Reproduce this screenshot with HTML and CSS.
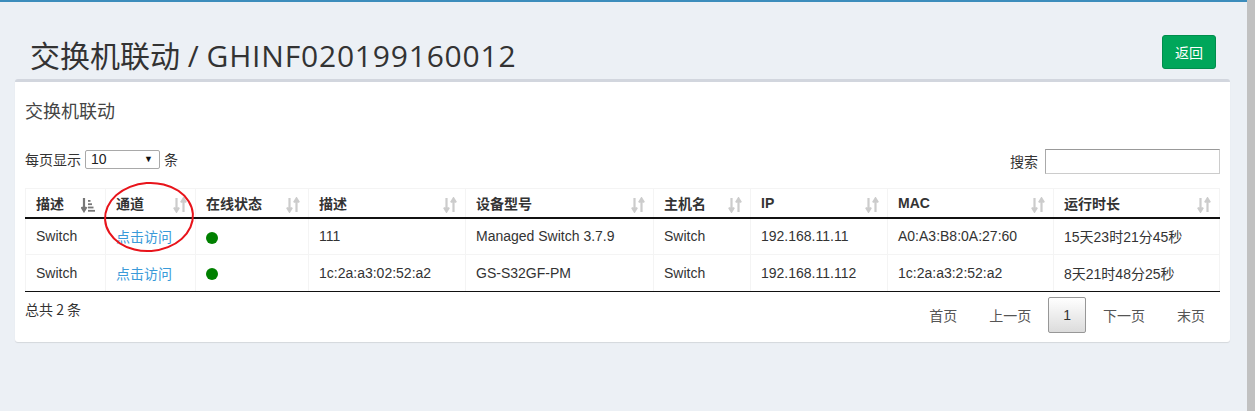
FILE: index.html
```html
<!DOCTYPE html>
<html lang="zh-CN">
<head>
<meta charset="utf-8">
<title>交换机联动</title>
<link rel="stylesheet" href="styles.css">
</head>
<body>
<div class="app">
  <div class="main">
    <div class="page-head">
      <h1 class="page-title">交换机联动 / <span class="code">GHINF020199160012</span></h1>
      <button class="btn-back">返回</button>
    </div>
    <div class="box">
      <h3 class="box-title">交换机联动</h3>
      <div class="controls">
        <div class="length">每页显示 <span class="select"><span>10</span><span class="caret">▼</span></span> 条</div>
        <div class="search">搜索 <span class="input"></span></div>
      </div>
      <div class="table-wrap">
        <table class="grid">
          <colgroup>
            <col style="width:80px"><col style="width:90px"><col style="width:113px"><col style="width:157px"><col style="width:188px"><col style="width:97px"><col style="width:137px"><col style="width:166px"><col style="width:166px">
          </colgroup>
          <thead>
            <tr>
              <th>描述<svg class="sort active" viewBox="0 0 14 16"><path d="M3 1v12M0.5 10L3 14l2.5-4" fill="none" stroke="#777" stroke-width="2.2"/><rect x="7" y="3" width="2.5" height="1.8" fill="#777"/><rect x="7" y="6.3" width="4" height="1.8" fill="#777"/><rect x="7" y="9.6" width="5.5" height="1.8" fill="#777"/><rect x="7" y="12.9" width="7" height="1.8" fill="#777"/></svg></th>
              <th>通道<svg class="sort" viewBox="0 0 14 16"><path d="M3.5 1v13M1 10.5l2.5 4 2.5-4M10.5 15V2M8 5.5l2.5-4 2.5 4" fill="none" stroke="#ccc" stroke-width="2.2"/></svg></th>
              <th>在线状态<svg class="sort" viewBox="0 0 14 16"><path d="M3.5 1v13M1 10.5l2.5 4 2.5-4M10.5 15V2M8 5.5l2.5-4 2.5 4" fill="none" stroke="#ccc" stroke-width="2.2"/></svg></th>
              <th>描述<svg class="sort" viewBox="0 0 14 16"><path d="M3.5 1v13M1 10.5l2.5 4 2.5-4M10.5 15V2M8 5.5l2.5-4 2.5 4" fill="none" stroke="#ccc" stroke-width="2.2"/></svg></th>
              <th>设备型号<svg class="sort" viewBox="0 0 14 16"><path d="M3.5 1v13M1 10.5l2.5 4 2.5-4M10.5 15V2M8 5.5l2.5-4 2.5 4" fill="none" stroke="#ccc" stroke-width="2.2"/></svg></th>
              <th>主机名<svg class="sort" viewBox="0 0 14 16"><path d="M3.5 1v13M1 10.5l2.5 4 2.5-4M10.5 15V2M8 5.5l2.5-4 2.5 4" fill="none" stroke="#ccc" stroke-width="2.2"/></svg></th>
              <th>IP<svg class="sort" viewBox="0 0 14 16"><path d="M3.5 1v13M1 10.5l2.5 4 2.5-4M10.5 15V2M8 5.5l2.5-4 2.5 4" fill="none" stroke="#ccc" stroke-width="2.2"/></svg></th>
              <th>MAC<svg class="sort" viewBox="0 0 14 16"><path d="M3.5 1v13M1 10.5l2.5 4 2.5-4M10.5 15V2M8 5.5l2.5-4 2.5 4" fill="none" stroke="#ccc" stroke-width="2.2"/></svg></th>
              <th>运行时长<svg class="sort" viewBox="0 0 14 16"><path d="M3.5 1v13M1 10.5l2.5 4 2.5-4M10.5 15V2M8 5.5l2.5-4 2.5 4" fill="none" stroke="#ccc" stroke-width="2.2"/></svg></th>
            </tr>
          </thead>
          <tbody>
            <tr>
              <td>Switch</td><td><a class="link" href="#">点击访问</a></td><td><span class="dot"></span></td><td>111</td><td>Managed Switch 3.7.9</td><td>Switch</td><td>192.168.11.11</td><td>A0:A3:B8:0A:27:60</td><td>15天23时21分45秒</td>
            </tr>
            <tr>
              <td>Switch</td><td><a class="link" href="#">点击访问</a></td><td><span class="dot"></span></td><td>1c:2a:a3:02:52:a2</td><td>GS-S32GF-PM</td><td>Switch</td><td>192.168.11.112</td><td>1c:2a:a3:2:52:a2</td><td>8天21时48分25秒</td>
            </tr>
          </tbody>
        </table>
        <span class="annot"></span>
      </div>
      <div class="footer">
        <div class="info">总共 2 条</div>
        <div class="pager">
          <span class="pg">首页</span>
          <span class="pg">上一页</span>
          <span class="pg current">1</span>
          <span class="pg">下一页</span>
          <span class="pg">末页</span>
        </div>
      </div>
    </div>
  </div>
  <div class="scrollbar"></div>
</div>
</body>
</html>
```
FILE: styles.css
```css
* { box-sizing: border-box; }
html, body { margin: 0; padding: 0; }
body {
  background: #ecf0f5;
  font-family: "Liberation Sans", "Noto Sans CJK SC", sans-serif;
  font-size: 14px;
  color: #333;
  height: 411px;
  overflow: hidden;
}
.app { display: flex; height: 411px; }
.main {
  flex: 1;
  border-top: 2px solid #3c8dbc;
  padding: 0 17px 0 15px;
}
.scrollbar { width: 9px; background: #c1c1c1; }
.page-head {
  display: flex;
  align-items: center;
  justify-content: space-between;
  padding: 30px 0 0 15px;
  height: 77px;
}
.page-title {
  margin: 0;
  font-family: "Open Sans", "Noto Sans CJK SC", sans-serif;
  font-weight: 400;
  font-size: 30px;
  color: #333;
  line-height: 40px;
}
.code { letter-spacing: 0.8px; }
.btn-back {
  font-family: "Noto Sans CJK SC", sans-serif;
  background: #00a65a;
  border: 1px solid #008d4c;
  color: #fff;
  font-size: 14px;
  border-radius: 3px;
  width: 54px;
  height: 34px;
  padding: 0;
  margin-right: 14px;
  margin-bottom: 8px;
}
.box {
  background: #fff;
  border-top: 3px solid #d2d6de;
  border-radius: 3px;
  box-shadow: 0 1px 1px rgba(0,0,0,0.1);
  padding: 0 10px 12px 10px;
  height: 263px;
}
.box-title {
  margin: 0;
  padding: 17px 0 0 0;
  font-size: 18px;
  font-weight: 400;
  line-height: 22px;
  font-family: "Noto Sans CJK SC", sans-serif;
  color: #444;
}
.controls {
  display: flex;
  justify-content: space-between;
  margin-top: 28px;
  height: 39px;
  font-size: 14px;
}
.length { display: flex; align-items: center; height: 20px; gap: 4px; font-family: "Noto Sans CJK SC", sans-serif; }
.select {
  display: inline-flex;
  justify-content: space-between;
  align-items: center;
  width: 75px;
  height: 19px;
  border: 1px solid #a9a9a9;
  border-radius: 2px;
  padding: 0 6px 0 5px;
  font-family: "Liberation Sans", sans-serif;
  font-size: 14px;
  color: #222;
}
.caret { font-size: 9px; color: #111; }
.search { display: flex; align-items: center; gap: 7px; height: 26px; margin-top: -1px; font-family: "Noto Sans CJK SC", sans-serif; }
.input {
  display: inline-block;
  width: 175px;
  height: 25px;
  border: 1px solid #ccc;
  border-top-color: #999;
  border-left-color: #aaa;
  background: #fff;
}
.table-wrap { position: relative; }
.grid {
  width: 1194px;
  border-collapse: collapse;
  table-layout: fixed;
}
.grid th {
  text-align: left;
  font-weight: 700;
  font-size: 14px;
  font-family: "Liberation Sans", "Noto Sans CJK SC", sans-serif;
  height: 29px;
  padding: 0 10px;
  border: 1px solid #f4f4f4;
  border-bottom: 2px solid #111;
  position: relative;
  color: #333;
}
.sort {
  position: absolute;
  right: 8px;
  top: 8px;
  width: 14px;
  height: 16px;
}
.sort.active { right: 10px; }
.grid td {
  font-size: 14px;
  height: 37px;
  padding: 0 10px;
  border: 1px solid #f4f4f4;
  color: #333;
}
.grid tbody tr:last-child td { border-bottom: 1px solid #111; }
.link { color: #3a9ad9; text-decoration: none; font-family: "Noto Sans CJK SC", sans-serif; font-size: 14px; }
.dot {
  display: inline-block;
  width: 12px;
  height: 12px;
  border-radius: 50%;
  background: #008000;
  vertical-align: middle;
}
.annot {
  position: absolute;
  left: 79px;
  top: -6px;
  width: 90px;
  height: 70px;
  border: 2px solid #e8141b;
  border-radius: 50%;
  transform: rotate(-4deg);
}
.footer {
  display: flex;
  justify-content: space-between;
  align-items: flex-start;
  margin-top: 5px;
}
.info { font-size: 14px; font-family: "Noto Sans CJK SC", sans-serif; padding-top: 2px; }
.pager { display: flex; font-family: "Noto Sans CJK SC", sans-serif; font-size: 14px; color: #555; }
.pg {
  display: inline-block;
  padding: 7px 14px;
  line-height: 20px;
  margin-left: 2px;
  border: 1px solid transparent;
  border-radius: 2px;
}
.pg.current {
  border-color: #979797;
  background: linear-gradient(#fff, #dcdcdc);
  color: #333;
  font-family: "Liberation Sans", sans-serif;
}
```
